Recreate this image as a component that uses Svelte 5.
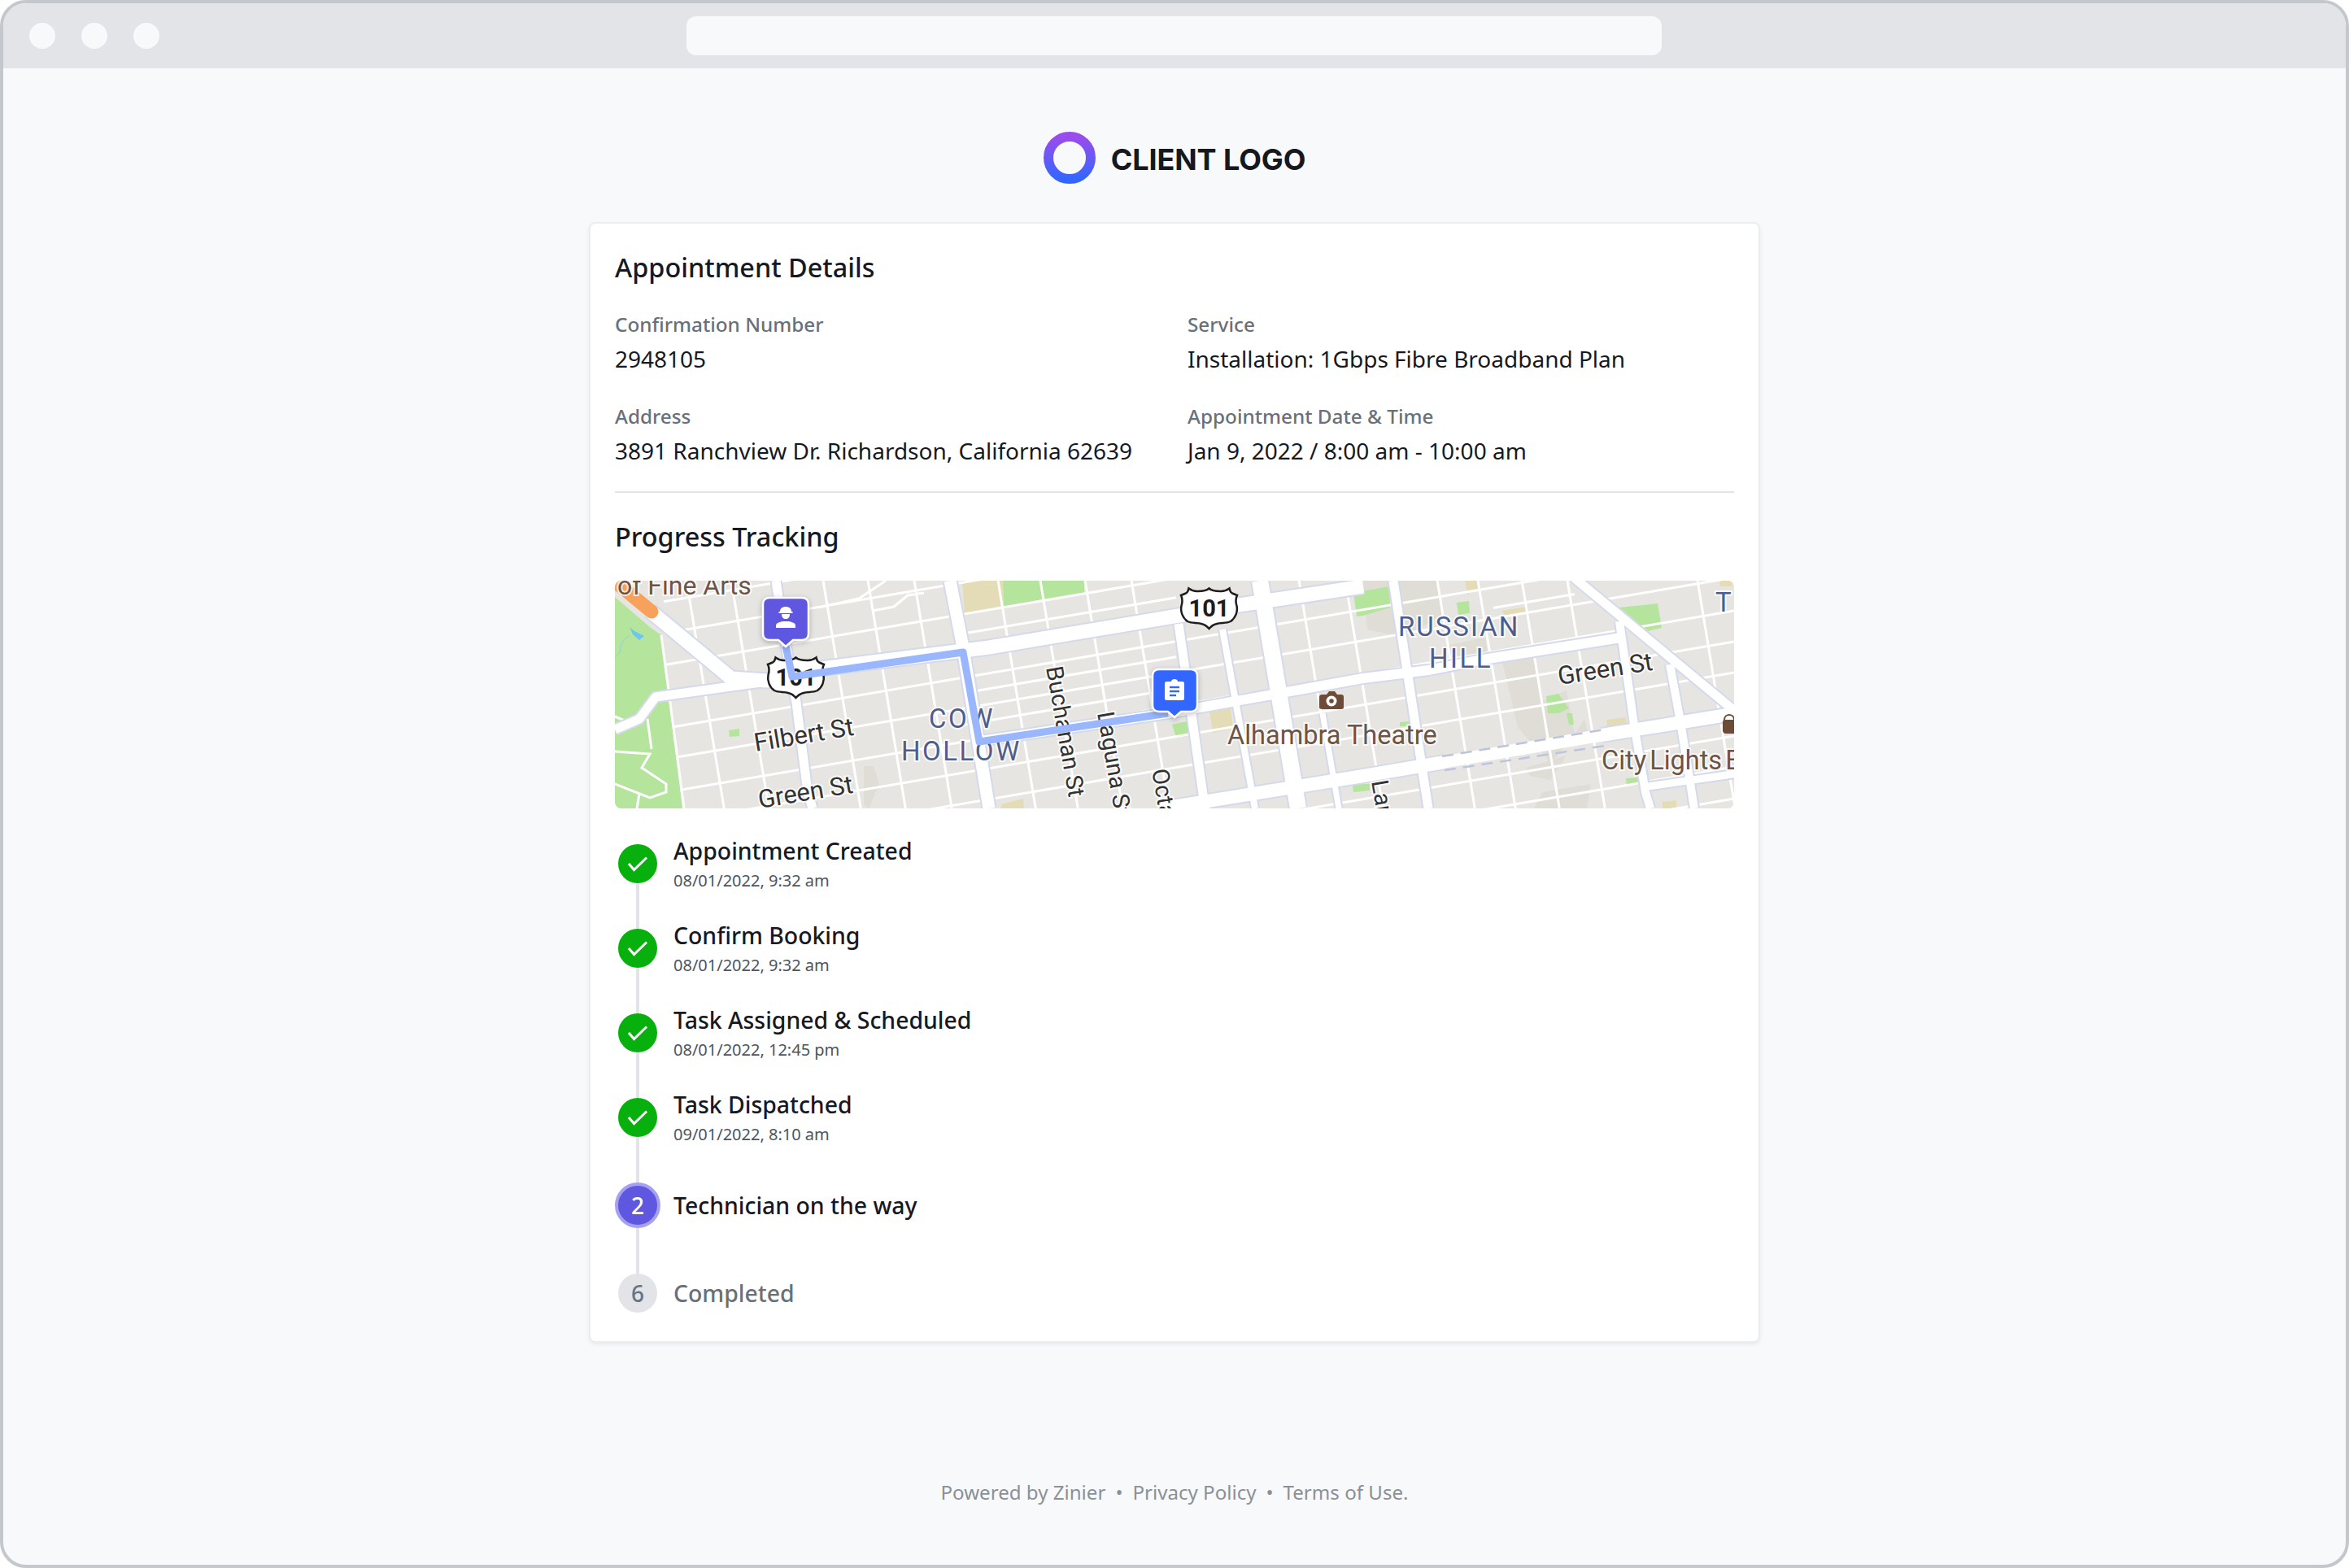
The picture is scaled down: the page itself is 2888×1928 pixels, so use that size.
<script>
  const sv = 0.165, sh = 0.17;
  const vMinor = [110,165,278,333,390,493,545,600,657,863,920,1033,1083,1137,1193,1353];
  const hMinor = [36,75,114,192,230,271,309,347,425,463,502];
  const hHalf = [[420,690,138],[430,690,211],[430,690,250],[1080,1180,217]];
  const vLines = vMinor.map((x) => [x - sv * 133, 0, x + sv * 147, 280]);
  const hLines = hMinor.map((y0) => [60, y0 - sh * 60, 1376, y0 - sh * 1376])
    .concat(hHalf.map(([a, b, y0]) => [a, y0 - sh * a, b, y0 - sh * b]));

  const soft = ['M920 0H1010L1020 40 970 70 925 60Z','M1090 95L1130 95 1150 190 1135 210 1110 180Z','M1135 150L1170 135 1180 190 1150 225 1130 195Z','M1020 80L1070 70 1075 100 1035 105Z','M1192 170L1170 205 1200 200Z','M1120 230L1170 215 1150 245 1125 240Z','M1140 260L1200 250 1195 280 1130 280Z','M306 228L318 228 325 250 312 280 306 275Z'];
  const green = ['M477 0L577 0 577 17 478 33Z','M140 184L153 182 153 191 141 192Z','M685 177L707 172 710 190 690 193Z','M908 15L952 7 953 33 920 43 912 44Z','M1035 27L1050 25 1051 40 1037 42Z','M1235 33L1282 28 1287 58 1270 62Z','M1145 142L1160 139 1173 157 1160 163 1147 163Z','M1170 163L1177 163 1179 177 1173 177Z','M1243 243L1258 242 1259 251 1244 252Z','M965 174L977 173 977 179 965 179Z','M907 252L920 250 928 250 928 258 908 260Z'];
  const beige = ['M427 0L477 0 478 33 430 42Z','M731 160L757 155 760 182 735 187Z','M475 275L502 268 503 280 475 280Z','M1045 0L1062 0 1062 10 1052 12 1048 18Z','M1090 37L1122 32 1120 40 1097 45Z','M1219 171L1243 168 1244 178 1220 180Z','M1288 272L1305 270 1305 280 1288 280Z','M1358 0L1375 0 1374 7 1359 7Z'];

  const majors = [
    { d: 'M412 0L427 77L460 280', w: 15 },
    { d: 'M198 0L208 67L223 150L237 260L243 280', w: 11 },
    { d: 'M693 53L723 263L735 330', w: 11 },
    { d: 'M747 60L787 280', w: 8 },
    { d: 'M793 0L840 280', w: 20 },
    { d: 'M870 163L890 280', w: 7 },
    { d: 'M957 0L1000 280', w: 11 },
    { d: 'M1235 50L1253 177L1267 260L1273 280', w: 10 },
    { d: 'M1297 103L1310 173L1327 280', w: 10 },
    { d: 'M1180 -3L1380 163', w: 11 },
    { d: 'M1270 253L1380 237', w: 9 },
    { d: 'M43 37L143 120L187 123L260 107L460 82L693 43L767 30L920 7', w: 17 },
    { d: 'M0 183L30 170L50 143L143 130L187 124', w: 11 },
    { d: 'M450 197L680 163L920 120L1000 110L1067 97L1237 70', w: 12 },
    { d: 'M673 280L920 240L1020 223', w: 16 },
    { d: 'M1213 190L1380 163', w: 16 }
  ];

  const steps = [
    { title: 'Appointment Created', date: '08/01/2022, 9:32 am', state: 'done' },
    { title: 'Confirm Booking', date: '08/01/2022, 9:32 am', state: 'done' },
    { title: 'Task Assigned & Scheduled', date: '08/01/2022, 12:45 pm', state: 'done' },
    { title: 'Task Dispatched', date: '09/01/2022, 8:10 am', state: 'done' },
    { title: 'Technician on the way', num: 2, state: 'active' },
    { title: 'Completed', num: 6, state: 'todo' }
  ];
  const shield = 'M1 10L7 7.5C9 6.5 10 4 10.5 1.5C14 4 18 5.5 22 5C27 5 32 4.5 35.5 1.5C39 4.5 44 5 49 5C53 5.5 57 4 60.5 1.5C61 4 62 6.5 64 7.5L70 10C68 14 68 18 69.5 23C71 30 68 38 62 42C56 45 50 43 45 45C41 46 38 48 35.5 51C33 48 30 46 26 45C21 43 15 45 9 42C3 38 0 30 1.5 23C3 18 3 14 1 10Z';
</script>

<div class="frame">
  <div class="topbar">
    <span class="dot"></span><span class="dot"></span><span class="dot"></span>
    <div class="address"></div>
  </div>

  <div class="logo">
    <svg class="logo-mark" viewBox="0 0 64 64" width="64" height="64">
      <defs>
        <linearGradient id="lg" x1="0" y1="0" x2="0" y2="1">
          <stop offset="0" stop-color="#9b4cec" />
          <stop offset="1" stop-color="#3366ff" />
        </linearGradient>
      </defs>
      <circle cx="32" cy="32" r="26" fill="none" stroke="url(#lg)" stroke-width="12" />
    </svg>
    <span class="logo-text">CLIENT LOGO</span>
  </div>

  <main class="card">
    <h2 class="heading">Appointment Details</h2>
    <div class="details">
      <div><div class="label">Confirmation Number</div><div class="value">2948105</div></div>
      <div><div class="label">Service</div><div class="value">Installation: 1Gbps Fibre Broadband Plan</div></div>
      <div><div class="label">Address</div><div class="value">3891 Ranchview Dr. Richardson, California 62639</div></div>
      <div><div class="label">Appointment Date &amp; Time</div><div class="value">Jan 9, 2022 / 8:00 am - 10:00 am</div></div>
    </div>
    <hr class="divider" />
    <h2 class="heading progress">Progress Tracking</h2>

    <div class="map">
      <svg viewBox="0 0 1376 280" width="1376" height="280">
        <rect width="1376" height="280" fill="#e6e5e1" />
        {#each soft as d}<path {d} fill="#dfddd6" />{/each}
        {#each green as d}<path {d} fill="#b5e59c" />{/each}
        {#each beige as d}<path {d} fill="#e4dcb6" />{/each}

        <g fill="none" stroke="#fff" stroke-width="3">
          {#each vLines as l}<line x1={l[0]} y1={l[1]} x2={l[2]} y2={l[3]} />{/each}
          {#each hLines as l}<line x1={l[0]} y1={l[1]} x2={l[2]} y2={l[3]} />{/each}
          <path d="M250 33L300 22L333 0" />
          <path d="M317 37L343 32L360 18L380 15" />
        </g>

        <path d="M0 20L43 57L57 67L83 280L0 280Z" fill="#b5e59c" />
        <g fill="none" stroke="#fff" stroke-width="3">
          <path d="M0 210L43 213L33 230L63 250L63 260L43 267L0 250" />
          <path d="M40 170L45 207" />
          <path d="M27 280L30 262" />
          <path d="M0 167L12 172" />
          <path d="M57 67L85 280" />
        </g>
        <path d="M18 57L24 62L36 68L30 73L22 66Z" fill="#6cc6f2" />
        <path d="M18 68C8 72 8 78 6 88L0 94" fill="none" stroke="#8ccde8" stroke-width="1" />

        <g fill="none" stroke="#d4d9ec" stroke-linejoin="round">
          {#each majors as m}<path d={m.d} stroke-width={m.w + 4} />{/each}
        </g>
        <g fill="none" stroke="#fff" stroke-linejoin="round">
          {#each majors as m}<path d={m.d} stroke-width={m.w} />{/each}
        </g>
        <path d="M1020 223L1213 190" fill="none" stroke="#fff" stroke-width="15" stroke-linecap="round" />
        <g stroke="#bcc4de" stroke-width="2.5" stroke-dasharray="14 9">
          <line x1="1017" y1="216" x2="1217" y2="183" />
          <line x1="1020" y1="233" x2="1217" y2="203" />
        </g>
        <path d="M5 5L45 38" stroke="#f7a15b" stroke-width="17" stroke-linecap="round" />

        <text class="t brown" x="3" y="17" font-size="32">of Fine Arts</text>
        <text class="t dark" transform="translate(173 210) rotate(-9.5)" font-size="31">Filbert St</text>
        <text class="t dark" transform="translate(178 280) rotate(-9.5)" font-size="31">Green St</text>
        <text class="t dark" transform="translate(1161 128) rotate(-9)" font-size="31">Green St</text>
        <text class="t dark" transform="translate(530 107) rotate(80)" font-size="29">Buchanan St</text>
        <text class="t dark" transform="translate(593 163) rotate(80)" font-size="29">Laguna St</text>
        <text class="t dark" transform="translate(660 233) rotate(80)" font-size="29">Octavia</text>
        <text class="t dark" transform="translate(930 247) rotate(80)" font-size="29">Larkin</text>
        <text class="t area" x="386" y="181" font-size="33" letter-spacing="2.5">COW</text>
        <text class="t area" x="352" y="221" font-size="33" letter-spacing="2.5">HOLLOW</text>
        <text class="t area" x="963" y="68" font-size="33" letter-spacing="2">RUSSIAN</text>
        <text class="t area" x="1001" y="107" font-size="33" letter-spacing="2.5">HILL</text>
        <text class="t area" x="1353" y="38" font-size="33">T</text>
        <text class="t brown" x="753" y="201" font-size="32.5">Alhambra Theatre</text>
        <text class="t brown" x="1213" y="232" font-size="32.5" word-spacing="-4">City Lights Books</text>

        <g transform="translate(187 93)">
          <path d={shield} fill="#fff" stroke="#1d1d1d" stroke-width="2.5" />
          <text class="shield-num" x="35.5" y="36" text-anchor="middle">101</text>
        </g>
        <g transform="translate(695 8)">
          <path d={shield} fill="#fff" stroke="#1d1d1d" stroke-width="2.5" />
          <text class="shield-num" x="35.5" y="36" text-anchor="middle">101</text>
        </g>

        <g fill="#6d4c37">
          <path d="M870 140H875L878 136H885L888 140H893C895 140 896 141 896 143V156C896 157 895 158 893 158H870C867 158 866 157 866 156V143C866 141 867 140 870 140Z" />
          <circle cx="881" cy="148" r="6.5" fill="#fff" /><circle cx="881" cy="148" r="2.8" />
          <path d="M1364 171C1364 163 1376 163 1376 171" fill="none" stroke="#6d4c37" stroke-width="2" />
          <path d="M1364 171H1376V188H1366C1363 188 1362 186 1362 184V173C1362 172 1363 171 1364 171Z" />
        </g>

        <path d="M210 80L218 118L428 88L448 198L680 163" fill="none" stroke="#9ab6fc" stroke-width="9" stroke-linejoin="round" />

        <g class="pin">
          <path d="M190 21H230C235 21 238 24 238 29V65C238 70 235 73 230 73H219L210 81L201 73H190C185 73 182 70 182 65V29C182 24 185 21 190 21Z" fill="#6057e0" stroke="#fff" stroke-width="2.5" />
          <path d="M203 38C203 34 206 32 210 32C214 32 217 34 217 38H218.5V40H201.5V38Z" fill="#fff" />
          <path d="M205 41H215C215 45 213 47 210 47C207 47 205 45 205 41Z" fill="#fff" />
          <path d="M198 58V55C198 52 203 50 210 50C217 50 222 52 222 55V58Z" fill="#fff" />
        </g>
        <g class="pin">
          <path d="M669 109H708C713 109 716 112 716 117V153C716 158 713 161 708 161H696L688 168L680 161H669C664 161 661 158 661 153V117C661 112 664 109 669 109Z" fill="#3366ff" stroke="#fff" stroke-width="2.5" />
          <path d="M678 124H684C684 120 692 120 692 124H698C699 124 700 125 700 126V145C700 146 699 147 698 147H678C677 147 676 146 676 145V126C676 125 677 124 678 124Z" fill="#fff" />
          <g stroke="#3366ff" stroke-width="2.4"><line x1="682" y1="131" x2="694" y2="131" /><line x1="682" y1="136" x2="694" y2="136" /><line x1="682" y1="141" x2="690" y2="141" /></g>
        </g>
      </svg>
    </div>

    <ol class="steps">
      {#each steps as s, i}
        <li class="step {s.state}">
          <span class="badge-col">
            {#if s.state === 'done'}
              <span class="badge">
                <svg viewBox="0 0 48 48" width="48" height="48"><path d="M13 24L19.5 31.5L35 16.5" fill="none" stroke="#fff" stroke-width="3" /></svg>
              </span>
            {:else}
              <span class="badge">{s.num}</span>
            {/if}
          </span>
          <div class="step-text">
            <div class="step-title">{s.title}</div>
            {#if s.date}<div class="step-date">{s.date}</div>{/if}
          </div>
          {#if i < steps.length - 1}<span class="connector"></span>{/if}
        </li>
      {/each}
    </ol>
  </main>

  <footer class="footer">Powered by Zinier<span class="sep">•</span>Privacy Policy<span class="sep">•</span>Terms of Use.</footer>
</div>

<style>
  :global(body) { margin: 0; background: #fff; }
  .frame {
    width: 2888px; height: 1928px; box-sizing: border-box;
    border: 4px solid #c4c8cc; border-radius: 32px; overflow: hidden;
    background: #f8f9fb; font-family: "Noto Sans", sans-serif; color: #16191f;
    display: flex; flex-direction: column; align-items: center;
  }
  .topbar {
    align-self: stretch; height: 80px; flex: none; background: #e2e4e8;
    display: flex; align-items: center; padding-left: 32px; gap: 32px;
  }
  .dot { width: 32px; height: 32px; border-radius: 50%; background: #f8f9fb; }
  .address { width: 1199px; height: 48px; border-radius: 12px; background: #f8f9fb; margin-left: 616px; }
  .logo { display: flex; align-items: center; gap: 19px; margin-top: 78px; height: 64px; }
  .logo-mark { display: block; }
  .logo-text { font-family: Inter, sans-serif; font-weight: 700; font-size: 36px; letter-spacing: -0.1px; color: #16181d; line-height: 64px; position: relative; top: 2px; }
  .card {
    width: 1440px; box-sizing: border-box; margin-top: 47px;
    background: #fff; border: 2px solid #ebedf0; border-radius: 8px;
    box-shadow: 0 2px 4px rgba(30, 40, 60, 0.08);
    padding: 33px 30px 35px;
  }
  .heading { margin: 0; font-size: 32.4px; line-height: 40px; font-weight: 500; }
  .details { display: grid; grid-template-columns: 1fr 1fr; column-gap: 32px; row-gap: 31px; margin-top: 33px; }
  .label { font-size: 24.3px; line-height: 36px; font-weight: 500; color: #68707c; }
  .value { font-size: 28px; line-height: 44px; margin-top: 2px; }
  .divider { border: 0; height: 2px; background: #e2e4e8; margin: 28px 0 0; }
  .progress { margin-top: 33px; }
  .map { margin-top: 35px; height: 280px; border-radius: 8px; overflow: hidden; }
  .map svg { display: block; }
  .t { font-family: Roboto, sans-serif; paint-order: stroke; stroke: rgba(255, 255, 255, 0.8); stroke-width: 4px; }
  .brown { fill: #6d5446; }
  .dark { fill: #333333; }
  .area { fill: #4e5d8c; }
  .shield-num { font-family: Roboto, sans-serif; font-weight: 700; font-size: 29px; fill: #1d1d1d; }
  .pin { filter: drop-shadow(0 2px 3px rgba(0, 0, 0, 0.25)); }
  .steps { list-style: none; margin: 44px 0 0; padding: 0; display: flex; flex-direction: column; gap: 56px; }
  .step { position: relative; display: flex; gap: 16px; height: 48px; }
  .step.active { height: 56px; }
  .badge-col { width: 56px; flex: none; display: flex; justify-content: center; }
  .badge {
    width: 48px; height: 48px; border-radius: 50%; display: flex; align-items: center; justify-content: center;
    font-size: 28px; font-weight: 500; line-height: 1;
  }
  .done .badge { background: #08b00d; }
  .active .badge { background: #6057e0; color: #fff; border: 4px solid #a5a0f0; }
  .todo .badge { background: #e2e4e8; color: #6b7280; }
  .step-text { display: flex; flex-direction: column; justify-content: center; }
  .done .step-text { margin-top: -12px; display: block; }
  .step-title { font-size: 28.4px; line-height: 40px; font-weight: 500; }
  .step-date { font-size: 20px; line-height: 30px; margin-top: 2px; color: #4b5563; }
  .todo .step-title { color: #68707c; }
  .connector { position: absolute; left: 26px; top: 100%; width: 4px; height: 56px; background: #e2e4e8; }
  .footer { margin-top: 166px; font-size: 24.1px; line-height: 36px; color: #8a9099; font-weight: 400; }
  .sep { margin: 0 12px; }
</style>
